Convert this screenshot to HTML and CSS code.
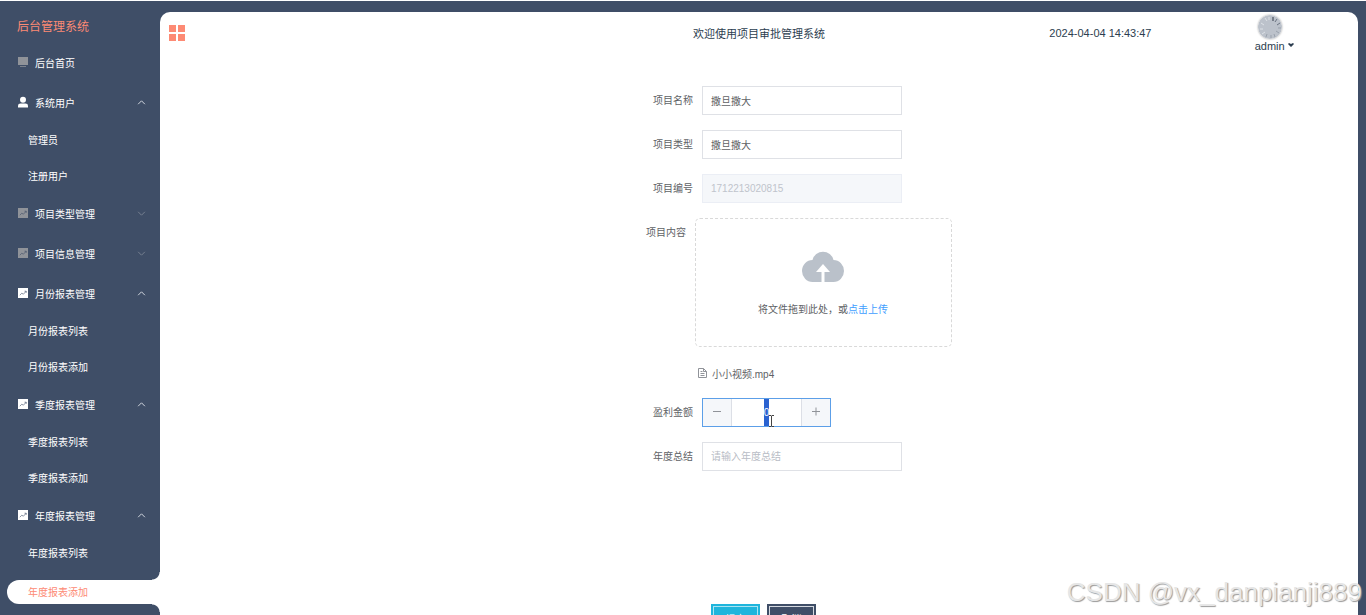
FILE: index.html
```html
<!DOCTYPE html>
<html lang="zh-CN">

<head>
    <meta charset="UTF-8">
    <meta name="viewport" content="width=device-width, initial-scale=1.0">
    <title>后台管理系统</title>
    <link rel="stylesheet" href="styles.css">
</head>

<body>
    <!-- 图标 -->
    <svg class="sprite" aria-hidden="true">
        <symbol id="i-screen" viewBox="0 0 12 12">
            <path d="M1 1h10v8H1zM3 10.200h6v.800H3z" />
        </symbol>
        <symbol id="i-user" viewBox="0 0 12 12">
            <circle cx="6" cy="3.700" r="3" />
            <path d="M1 11.500V9.800Q1 7.500 3.500 7.500h5Q11 7.500 11 9.800V11.500z" />
        </symbol>
        <symbol id="i-chart" viewBox="0 0 12 12">
            <path d="M1 1h10v10H1z" />
            <path d="M2.800 8.200l2-2 1.600 1 2.800-3M7.500 4.200h1.700v1.700" fill="none" stroke="#3f4e67" stroke-width=".6" />
        </symbol>
        <symbol id="i-up" viewBox="0 0 8 8">
            <path d="M1 5.500l3-3 3 3" fill="none" stroke="currentColor" stroke-width=".8" />
        </symbol>
        <symbol id="i-down" viewBox="0 0 8 8">
            <path d="M1 2.500l3 3 3-3" fill="none" stroke="currentColor" stroke-width=".8" />
        </symbol>
    </svg>

    <div class="app">
        <aside class="sidebar">
            <h1 class="logo">后台管理系统</h1>
            <nav>
                <a href="#" class="menu"><svg class="icon gray"><use href="#i-screen" /></svg>后台首页</a>

                <a href="#" class="menu"><svg class="icon"><use href="#i-user" /></svg>系统用户<svg class="arrow"><use href="#i-up" /></svg></a>
                <div class="submenu">
                    <a href="#">管理员</a>
                    <a href="#">注册用户</a>
                </div>

                <a href="#" class="menu"><svg class="icon gray"><use href="#i-chart" /></svg>项目类型管理<svg class="arrow gray"><use href="#i-down" /></svg></a>
                <a href="#" class="menu"><svg class="icon gray"><use href="#i-chart" /></svg>项目信息管理<svg class="arrow gray"><use href="#i-down" /></svg></a>

                <a href="#" class="menu"><svg class="icon"><use href="#i-chart" /></svg>月份报表管理<svg class="arrow"><use href="#i-up" /></svg></a>
                <div class="submenu">
                    <a href="#">月份报表列表</a>
                    <a href="#">月份报表添加</a>
                </div>

                <a href="#" class="menu"><svg class="icon"><use href="#i-chart" /></svg>季度报表管理<svg class="arrow"><use href="#i-up" /></svg></a>
                <div class="submenu">
                    <a href="#">季度报表列表</a>
                    <a href="#">季度报表添加</a>
                </div>

                <a href="#" class="menu"><svg class="icon"><use href="#i-chart" /></svg>年度报表管理<svg class="arrow"><use href="#i-up" /></svg></a>
                <div class="submenu">
                    <a href="#">年度报表列表</a>
                    <a href="#" class="active">年度报表添加</a>
                </div>
            </nav>
        </aside>

        <main class="main">
            <header class="header">
                <button type="button" class="collapse" aria-label="折叠菜单">
                    <svg viewBox="0 0 16 16" width="16" height="16">
                        <path d="M0 0h7v7H0zM9 0h7v7H9zM0 9h7v7H0zM9 9h7v7H9z" />
                    </svg>
                </button>
                <div class="welcome">欢迎使用项目审批管理系统</div>
                <div class="time">2024-04-04 14:43:47</div>
                <div class="user">
                    <svg class="avatar" viewBox="0 0 24 24">
                        <circle cx="12" cy="12" r="12" fill="#bcc2cb" />
                        <g stroke-width="1" fill="none">
                            <path d="M15 2v4" stroke="#333b48" />
                            <path d="M19 4l-2 3M22 8l-3 2" stroke="#6b7380" />
                            <path d="M23 13h-3M21 18l-3-2M17 22l-1-3M13 23v-3M8 22l1-3" stroke="#99a1ac" />
                            <path d="M4 19l3-2M2 14h3M3 8l3 2M7 3l2 3M11 2v3" stroke="#dde1e6" />
                        </g>
                    </svg>
                    <button type="button" class="name">admin<svg viewBox="0 0 6 5" width="6" height="5"><path d="M0 1l3 3 3-3-1-1-2 1-2-1z" /></svg></button>
                </div>
            </header>

            <form class="form">
                <div class="item">
                    <label for="pname">项目名称</label>
                    <input type="text" id="pname" class="text" value="撒旦撒大">
                </div>
                <div class="item">
                    <label for="ptype">项目类型</label>
                    <input type="text" id="ptype" class="text" value="撒旦撒大">
                </div>
                <div class="item">
                    <label for="pno">项目编号</label>
                    <input type="text" id="pno" class="text" value="1712213020815" disabled>
                </div>
                <div class="item wide">
                    <label for="file">项目内容</label>
                    <div class="content">
                        <label class="upload" for="file">
                            <svg viewBox="0 0 42 32" width="42" height="32">
                                <path d="M10.500 32A10.500 11 0 0 1 10.500 10A10.800 10.800 0 0 1 31.500 10A10.500 11 0 0 1 31.500 32H22.500V22H28L21 14 14 22h5.500v10z" />
                            </svg>
                            <span>将文件拖到此处，或<em>点击上传</em></span>
                        </label>
                        <input type="file" id="file" class="file">
                        <a href="#" class="filename">
                            <svg viewBox="0 0 9 10" width="9" height="10">
                                <path d="M.500.500h5l3 3v6h-8zM5.500.500v3h3M2.500 3.500h2M2.500 5.500h4M2.500 7.500h4" />
                            </svg>小小视频.mp4
                        </a>
                    </div>
                </div>
                <div class="item">
                    <label for="money">盈利金额</label>
                    <div class="number">
                        <button type="button" aria-label="减少"><svg viewBox="0 0 9 9" width="9" height="9"><path d="M0 4.500h8" /></svg></button>
                        <input type="text" id="money" value="0">
                        <button type="button" aria-label="增加"><svg viewBox="0 0 9 9" width="9" height="9"><path d="M0 4.500h8M4 .500v8" /></svg></button>
                        <svg class="cursor" viewBox="0 0 7 12" width="7" height="12"><path d="M1 .500h2l.500.500.500-.500h2M3.500 1v10M1 11.500h2l.500-.500.500.500h2" /></svg>
                    </div>
                </div>
                <div class="item">
                    <label for="summary">年度总结</label>
                    <input type="text" id="summary" class="text" placeholder="请输入年度总结">
                </div>
                <div class="btns">
                    <button type="submit" class="submit">提交</button>
                    <button type="button" class="cancel">取消</button>
                </div>
            </form>
        </main>
    </div>

    <div class="watermark">CSDN @vx_danpianji889</div>

    <script>
        // 进入页面默认选中金额
        var money = document.getElementById('money');
        money.focus();
        money.select();
    </script>
</body>

</html>
```
FILE: styles.css
```css
* {
    box-sizing: border-box;
}

body {
    margin: 0;
    height: 100vh;
    overflow: hidden;
    background-color: #3f4e67;
    border-top: 1px solid #fff;
    font-family: "Liberation Sans", "Noto Sans CJK SC", sans-serif;
    font-size: 10px;
    color: #606266;
}

input,
button {
    font-family: inherit;
    font-size: 10px;
    margin: 0;
    padding: 0;
}

a {
    text-decoration: none;
}

.sprite {
    position: absolute;
    width: 0;
    height: 0;
}

.app {
    display: flex;
    height: 100%;
}

/* 左侧菜单 */
.sidebar {
    flex: 0 0 160px;
}

.logo {
    margin: 0;
    padding: 9px 0 0 17px;
    height: 41px;
    line-height: 34px;
    font-size: 12px;
    font-weight: normal;
    color: #fd8a74;
}

.menu {
    display: flex;
    align-items: center;
    height: 40px;
    padding: 0 14px 0 17px;
    color: #fff;
}

.icon {
    width: 12px;
    height: 12px;
    margin-right: 6px;
    fill: #fff;
}

.icon.gray {
    fill: #909399;
}

.arrow {
    width: 9px;
    height: 9px;
    margin-left: auto;
    color: #dfe3ea;
}

.arrow.gray {
    color: #7c8594;
}

.submenu {
    margin: 1px 0 -2px;
}

.submenu a {
    display: block;
    height: 36px;
    line-height: 36px;
    padding-left: 28px;
    color: #fff;
}

.submenu .active {
    position: relative;
    height: 24px;
    line-height: 26px;
    margin: 8px 0 0 7px;
    padding-left: 21px;
    border-radius: 12px 0 0 12px;
    background-color: #fff;
    color: #fd8a74;
}

/* 选中项上下的反向圆角 */
.active::before,
.active::after {
    content: "";
    position: absolute;
    right: 0;
    width: 8px;
    height: 8px;
}

.active::before {
    top: -8px;
    background: radial-gradient(circle at 0 0, #3f4e67 7px, #fff 8px);
}

.active::after {
    bottom: -8px;
    background: radial-gradient(circle at 0 100%, #3f4e67 7px, #fff 8px);
}

/* 右侧内容 */
.main {
    flex: 1;
    margin: 11px 8px 0 0;
    border-radius: 10px 10px 0 0;
    background-color: #fff;
}

.header {
    display: grid;
    grid-template-columns: 29fr 42fr 15fr 14fr;
    align-items: center;
    height: 42px;
    font-size: 11px;
    text-align: center;
    color: #2c3e50;
}

.collapse {
    justify-self: start;
    margin-left: 9px;
    width: 16px;
    height: 16px;
    border: 0;
    background: none;
}

.collapse svg {
    display: block;
    fill: #fd8a74;
}

.user {
    display: flex;
    flex-direction: column;
    align-items: center;
    padding-top: 2px;
}

.avatar {
    width: 24px;
    height: 24px;
    margin-right: 8px;
    border-radius: 50%;
    box-shadow: 0 0 2px #999;
}

.name {
    border: 0;
    background: none;
    font-size: 11px;
    line-height: 15px;
    color: #2c3e50;
}

.name svg {
    margin: 0 0 2px 3px;
    fill: #2c3e50;
}

/* 表单 */
.form {
    width: 386px;
    margin: 0 auto;
    padding: 32px 0 0 80px;
}

.item {
    display: flex;
    margin-bottom: 15px;
    padding-left: 7px;
}

.item.wide {
    padding-left: 0;
}

.item > label {
    flex: 0 0 49px;
    height: 29px;
    line-height: 30px;
}

.text {
    width: 200px;
    height: 29px;
    padding: 0 8px;
    border: 1px solid #dfe1e6;
    background-color: #fff;
    color: #606266;
}

.text:disabled {
    background-color: #f5f7fa;
    border-color: #ebeef5;
    color: #c0c4cc;
}

.text::placeholder {
    color: #b8bcc5;
}

.content {
    flex: 1;
}

.upload {
    display: flex;
    flex-direction: column;
    align-items: center;
    height: 129px;
    padding: 31px 1px 0 0;
    border: 1px dashed #d9d9d9;
    border-radius: 5px;
    cursor: pointer;
}

.upload svg {
    fill: #bac1ca;
}

.upload span {
    margin-top: 18px;
    line-height: 20px;
}

.upload em {
    font-style: normal;
    color: #409eff;
}

.file {
    display: none;
}

.filename {
    display: flex;
    align-items: center;
    height: 20px;
    margin-top: 16px;
    padding-left: 3px;
    color: #606266;
}

.filename svg {
    margin-right: 5px;
    fill: none;
    stroke: #909399;
}

.number {
    position: relative;
    display: flex;
    width: 129px;
    height: 29px;
    border: 1px solid #5c9fe8;
}

.number button {
    width: 29px;
    border: 0;
    background-color: #f5f7fa;
    border-right: 1px solid #dcdfe6;
}

.number input + button {
    border-right: 0;
    border-left: 1px solid #dcdfe6;
}

.number button svg {
    stroke: #909399;
}

.number input {
    flex: 1;
    min-width: 0;
    height: 27px;
    line-height: 27px;
    border: 0;
    outline: none;
    text-align: center;
    color: #606266;
}

.number input::selection {
    background-color: #2a62d0;
    color: #fff;
}

.cursor {
    position: absolute;
    left: 65px;
    top: 16px;
    fill: none;
    stroke: #444;
}

.btns {
    display: flex;
    gap: 7px;
    margin-top: 133px;
    padding-left: 65px;
}

.btns button {
    width: 49px;
    height: 28px;
    border: 1px solid #1fb5dc;
    box-shadow: inset 0 0 0 1px #1fb5dc, inset 0 0 0 2px #a9e4f3;
    background-color: #1fb5dc;
    color: #fff;
}

.btns .cancel {
    border-color: #3f4e67;
    box-shadow: inset 0 0 0 1px #3f4e67, inset 0 0 0 2px #d5d9e0;
    background-color: #3f4e67;
}

/* 水印 */
.watermark {
    position: absolute;
    right: 4px;
    bottom: 8px;
    font-size: 26px;
    line-height: 30px;
    color: #e6e6e6;
    text-shadow: 1px 1px 1px #999;
    pointer-events: none;
}
```
